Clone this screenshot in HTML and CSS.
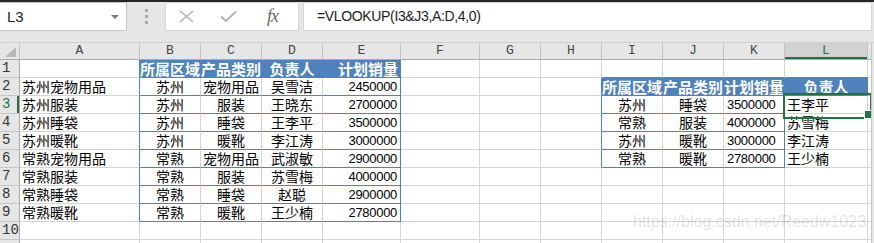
FILE: index.html
```html
<!DOCTYPE html>
<html lang="zh-CN">
<head>
    <meta charset="UTF-8">
    <title>VLOOKUP</title>
    <link rel="stylesheet" href="styles.css">
</head>
<body>

	<div class="toolbar">
		<div class="namebox">
			<span>L3</span>
			<span class="caret"></span>
		</div>
		<div class="grip">
			<svg width="3" height="16" viewBox="0 0 3 16"><rect x="0" y="0" width="3" height="3" fill="#a8a8a8"/><rect x="0" y="6" width="3" height="3" fill="#a8a8a8"/><rect x="0" y="12" width="3" height="3" fill="#a8a8a8"/></svg>
		</div>
		<div class="fxbox">
			<svg class="ico-x" width="17" height="13" viewBox="0 0 17 13"><path d="M2 1 L15 12 M15 1 L2 12" stroke="#b4b4b4" stroke-width="1.6" fill="none"/></svg>
			<svg class="ico-ok" width="17" height="13" viewBox="0 0 17 13"><path d="M1 6.5 L6 11 L16 1.5" stroke="#b4b4b4" stroke-width="2" fill="none"/></svg>
			<span class="fx">fx</span>
		</div>
		<div class="formula">=VLOOKUP(I3&amp;J3,A:D,4,0)</div>
	</div>

	<div class="sheet">
		<!-- column headers -->
		<div class="ch corner"><svg width="11" height="10" viewBox="0 0 11 10"><path d="M11 0 L11 10 L0 10 Z" fill="#b9b9b9"/></svg></div>
		<div class="ch">A</div><div class="ch">B</div><div class="ch">C</div><div class="ch">D</div>
		<div class="ch">E</div><div class="ch">F</div><div class="ch">G</div><div class="ch">H</div>
		<div class="ch">I</div><div class="ch">J</div><div class="ch">K</div><div class="ch on">L</div><div class="ch"></div>

		<!-- 1 -->
		<div class="rh">1</div>
		<div class="c br"></div>
		<div class="c hd">所属区域</div><div class="c hd">产品类别</div><div class="c hd">负责人</div><div class="c hd right">计划销量</div>
		<div class="c"></div><div class="c"></div><div class="c"></div>
		<div class="c bb"></div><div class="c bb"></div><div class="c bb"></div><div class="c bb"></div><div class="c"></div>

		<!-- 2 -->
		<div class="rh">2</div>
		<div class="c br">苏州宠物用品</div>
		<div class="c bb mid">苏州</div><div class="c bb mid">宠物用品</div><div class="c bb mid">吴雪洁</div><div class="c bb br num right">2450000</div>
		<div class="c"></div><div class="c"></div><div class="c br"></div>
		<div class="c hd">所属区域</div><div class="c hd">产品类别</div><div class="c hd">计划销量</div><div class="c hd">负责人</div><div class="c"></div>

		<!-- 3 -->
		<div class="rh on">3</div>
		<div class="c br">苏州服装</div>
		<div class="c bb mid">苏州</div><div class="c bb mid">服装</div><div class="c bb mid">王晓东</div><div class="c bb br num right">2700000</div>
		<div class="c"></div><div class="c"></div><div class="c br"></div>
		<div class="c bb mid">苏州</div><div class="c bb mid">睡袋</div><div class="c bb br num">3500000</div><div class="c sel">王李平</div><div class="c"></div>

		<!-- 4 -->
		<div class="rh">4</div>
		<div class="c br">苏州睡袋</div>
		<div class="c bb mid">苏州</div><div class="c bb mid">睡袋</div><div class="c bb mid">王李平</div><div class="c bb br num right">3500000</div>
		<div class="c"></div><div class="c"></div><div class="c br"></div>
		<div class="c bb mid">常熟</div><div class="c bb mid">服装</div><div class="c bb br num">4000000</div><div class="c">苏雪梅</div><div class="c"></div>

		<!-- 5 -->
		<div class="rh">5</div>
		<div class="c br">苏州暖靴</div>
		<div class="c bb mid">苏州</div><div class="c bb mid">暖靴</div><div class="c bb mid">李江涛</div><div class="c bb br num right">3000000</div>
		<div class="c"></div><div class="c"></div><div class="c br"></div>
		<div class="c bb mid">苏州</div><div class="c bb mid">暖靴</div><div class="c bb br num">3000000</div><div class="c">李江涛</div><div class="c"></div>

		<!-- 6 -->
		<div class="rh">6</div>
		<div class="c br">常熟宠物用品</div>
		<div class="c bb mid">常熟</div><div class="c bb mid">宠物用品</div><div class="c bb mid">武淑敏</div><div class="c bb br num right">2900000</div>
		<div class="c"></div><div class="c"></div><div class="c br"></div>
		<div class="c bb mid">常熟</div><div class="c bb mid">暖靴</div><div class="c bb br num">2780000</div><div class="c">王少楠</div><div class="c"></div>

		<!-- 7 -->
		<div class="rh">7</div>
		<div class="c br">常熟服装</div>
		<div class="c bb mid">常熟</div><div class="c bb mid">服装</div><div class="c bb mid">苏雪梅</div><div class="c bb br num right">4000000</div>
		<div class="c"></div><div class="c"></div><div class="c"></div>
		<div class="c"></div><div class="c"></div><div class="c"></div><div class="c"></div><div class="c"></div>

		<!-- 8 -->
		<div class="rh">8</div>
		<div class="c br">常熟睡袋</div>
		<div class="c bb mid">常熟</div><div class="c bb mid">睡袋</div><div class="c bb mid">赵聪</div><div class="c bb br num right">2900000</div>
		<div class="c"></div><div class="c"></div><div class="c"></div>
		<div class="c"></div><div class="c"></div><div class="c"></div><div class="c"></div><div class="c"></div>

		<!-- 9 -->
		<div class="rh">9</div>
		<div class="c br">常熟暖靴</div>
		<div class="c bb mid">常熟</div><div class="c bb mid">暖靴</div><div class="c bb mid">王少楠</div><div class="c bb br num right">2780000</div>
		<div class="c"></div><div class="c"></div><div class="c"></div>
		<div class="c"></div><div class="c"></div><div class="c"></div><div class="c"></div><div class="c"></div>

		<!-- 10 -->
		<div class="rh">10</div>
		<div class="c"></div><div class="c"></div><div class="c"></div><div class="c"></div><div class="c"></div>
		<div class="c"></div><div class="c"></div><div class="c"></div>
		<div class="c"></div><div class="c"></div><div class="c"></div><div class="c"></div><div class="c"></div>

		<!-- 11 -->
		<div class="rh"></div>
		<div class="c"></div><div class="c"></div><div class="c"></div><div class="c"></div><div class="c"></div>
		<div class="c"></div><div class="c"></div><div class="c"></div>
		<div class="c"></div><div class="c"></div><div class="c"></div><div class="c"></div><div class="c"></div>
	</div>

	<div class="wm">https://blog.csdn.net/Reedw1023</div>

</body>
</html>
```

FILE: styles.css
```css
* {
	box-sizing: border-box;
}
body {
	margin: 0;
	width: 874px;
	height: 243px;
	overflow: hidden;
	position: relative;
	background-color: #e6e6e6;
	font-family: "Liberation Sans", Arial, sans-serif;
}

/* formula bar */
.toolbar {
	height: 43px;
	border-top: 2px solid #262626;
	border-bottom: 1px solid #cfcfcf;
	display: flex;
	align-items: flex-start;
}
.namebox {
	width: 127px;
	height: 29px;
	background-color: #fff;
	border: 1px solid #c6c6c6;
	border-left: none;
	display: flex;
	align-items: center;
	justify-content: space-between;
	padding: 0 7px 0 7px;
	font-size: 15px;
	color: #222;
}
.caret {
	width: 0;
	height: 0;
	border-left: 4px solid transparent;
	border-right: 4px solid transparent;
	border-top: 4px solid #7a7a7a;
	margin-top: 1px;
}
.grip {
	width: 38px;
	height: 29px;
	display: flex;
	align-items: center;
	justify-content: center;
	padding-top: 1px;
}
.fxbox {
	width: 134px;
	height: 29px;
	background-color: #fff;
	border: 1px solid #d6d6d6;
	display: flex;
	align-items: center;
}
.ico-x {
	margin-left: 12px;
}
.ico-ok {
	margin-left: 25px;
}
.fx {
	margin-left: 30px;
	font-family: "Liberation Serif", "Times New Roman", serif;
	font-style: italic;
	font-size: 18px;
	color: #6a6a6a;
	letter-spacing: -1px;
}
.formula {
	margin-left: 4px;
	width: 569px;
	height: 29px;
	background-color: #fff;
	border: 1px solid #d6d6d6;
	padding-left: 13px;
	font-size: 14px;
	letter-spacing: -0.35px;
	line-height: 27px;
	color: #222;
}

/* grid */
.sheet {
	display: grid;
	grid-template-columns: 20px 120px 61px 61px 61px 78px 79px 61px 61px 61px 61px 61px 83px 1fr;
	grid-template-rows: 17px;
	grid-auto-rows: 18px;
	width: 872px;
	height: 200px;
	overflow: hidden;
	border-right: 1px solid #c6c6c6;
	background-color: #fff;
}
.ch {
	background-color: #e6e6e6;
	border-right: 1px solid #c3c3c3;
	border-bottom: 1px solid #ababab;
	text-align: center;
	font-family: "Liberation Mono", "Courier New", monospace;
	font-size: 13px;
	line-height: 16px;
	color: #444;
}
.ch.on {
	background-color: #d2d2d2;
	color: #217346;
	box-shadow: inset 0 -2px 0 #217346;
}
.corner {
	display: flex;
	align-items: flex-end;
	justify-content: flex-end;
	padding: 0 3px 2px 0;
}
.rh {
	background-color: #e6e6e6;
	border-right: 1px solid #ababab;
	border-bottom: 1px solid #c6c6c6;
	font-family: "Liberation Mono", "Courier New", monospace;
	font-size: 14px;
	line-height: 17px;
	padding-left: 2px;
	color: #333;
}
.rh.on {
	color: #217346;
	box-shadow: inset -2px 0 0 #217346;
}
.c {
	border-right: 1px solid #d4d4d4;
	border-bottom: 1px solid #d4d4d4;
	font-family: "Noto Sans CJK SC", "Liberation Sans", sans-serif;
	font-size: 14px;
	line-height: 17px;
	padding: 0 2px;
	white-space: nowrap;
	color: #000;
}
.mid {
	text-align: center;
}
.right {
	text-align: right;
}
.num {
	font-family: "Liberation Sans", Arial, sans-serif;
	font-size: 13px;
	letter-spacing: -0.3px;
	padding-left: 3px;
}
.num.right {
	padding-right: 3px;
}
.bb {
	border-bottom-color: #4f81bd;
}
.br {
	border-right-color: #4f81bd;
}
.hd {
	background-color: #4f81bd;
	border-color: #4f81bd;
	color: #fff;
	font-weight: bold;
	font-size: 15px;
	text-align: center;
	padding: 0;
}
.hd.right {
	text-align: right;
	padding-right: 2px;
}

/* active cell */
.sel {
	position: relative;
}
.sel::after {
	content: "";
	position: absolute;
	left: -2px;
	top: -3px;
	width: 85px;
	height: 22px;
	border: 2px solid #217346;
}
.sel::before {
	content: "";
	position: absolute;
	left: 79px;
	top: 14px;
	width: 7px;
	height: 7px;
	background-color: #217346;
	border: 1px solid #fff;
	z-index: 1;
}

.wm {
	position: absolute;
	left: 633px;
	top: 213px;
	font-size: 16px;
	color: rgba(0, 0, 0, 0.12);
	white-space: nowrap;
}
```
